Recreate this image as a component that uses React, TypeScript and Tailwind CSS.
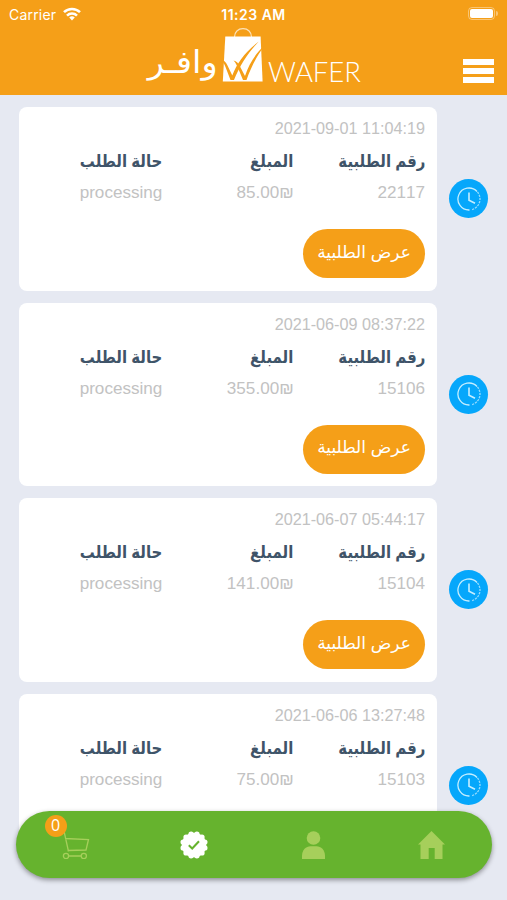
import React from 'react';

const orders = [
  { date: '2021-09-01 11:04:19', id: '22117', total: '85.00₪' },
  { date: '2021-06-09 08:37:22', id: '15106', total: '355.00₪' },
  { date: '2021-06-07 05:44:17', id: '15104', total: '141.00₪' },
  { date: '2021-06-06 13:27:48', id: '15103', total: '75.00₪' },
];

function WifiIcon() {
  return (
    <svg className="ml-[7px] h-[14px] w-[18px]" viewBox="0 0 18 14" fill="none" stroke="#fff" strokeWidth="2.5">
      <path d="M1 5.2a11.3 11.3 0 0 1 16 0" />
      <path d="M4 8.6a7 7 0 0 1 10 0" />
      <path d="M6.2 10.6a4 4 0 0 1 5.6 0L9 13.6z" fill="#fff" stroke="none" />
    </svg>
  );
}

function BagIcon() {
  return (
    <svg className="h-[56px] w-[44px] shrink-0" viewBox="0 0 44 56" fill="none">
      <path d="M13.5 9c0-5 3.5-8.300 8.500-8.300s8.500 3.300 8.500 8.300" stroke="#fff" strokeOpacity=".7" strokeWidth="1.200" />
      <path d="M4.300 8.500h35.300l2 45H1.800z" fill="#fff" />
      <path d="M0 31.500c3 .5 5 2.500 6.500 6l4.800 10C16 35 24 24 37.700 13.500 27 25 19 37 13 52h-3.500L4.500 39C3 35.500 1.500 33 0 31.500z" fill="#f59f18" />
      <path d="M12.500 32.500c3 .5 5 2.500 6.500 6l5 9.500C28 36 34 26 43.500 17.500 36 28 30.500 38 25.500 52H22l-5-12c-1.500-3.500-2.500-5.500-4.500-7.500z" fill="#f59f18" />
    </svg>
  );
}

function ClockBadge() {
  return (
    <div className="flex size-[39px] shrink-0 items-center justify-center rounded-full bg-[#06a7fb]">
      <svg className="size-6" viewBox="0 0 24 24" fill="none" stroke="#c5eeff" strokeWidth="1.300">
        <path d="M12.500 23A11 11 0 1 1 20 4.500" />
        <path d="M20.500 5A11 11 0 0 1 14.500 22.700" strokeDasharray="2.200 1" strokeOpacity=".75" />
        <path d="M12 5.500v7.800l6 3" strokeWidth="1.600" />
      </svg>
    </div>
  );
}

function Field({ label, value }: { label: string; value: string }) {
  return (
    <div>
      <div className="h-[31px] origin-right scale-x-[0.88] text-[17px] leading-[33px] font-bold whitespace-nowrap text-[#3f5469]">{label}</div>
      <div dir="ltr" className="h-[31px] text-right text-[17.100px] leading-[33px] text-[#c2c2c2] [font-kerning:none]">{value}</div>
    </div>
  );
}

function OrderRow({ date, id, total }: { date: string; id: string; total: string }) {
  return (
    <div className="flex shrink-0 items-center gap-[12px]">
      <div dir="rtl" className="h-[183.500px] w-[418px] rounded-[8px] bg-white px-[12px] pt-[10px]">
        <div dir="ltr" className="h-[28px] text-right text-[16.200px] leading-[22px] text-[#c2c2c2] [font-kerning:none]">{date}</div>
        <div className="grid grid-cols-3">
          <Field label="رقم الطلبية" value={id} />
          <Field label="المبلغ" value={total} />
          <Field label="حالة الطلب" value="processing" />
        </div>
        <button className="mt-[22px] flex h-[49px] w-[122px] items-center justify-center rounded-full bg-[#f59f18] pb-[2px] text-[17px] whitespace-nowrap text-white">
          عرض الطلبية
        </button>
      </div>
      <ClockBadge />
    </div>
  );
}

function CartIcon() {
  return (
    <svg className="h-[28px] w-[28px]" viewBox="0 0 28 28" fill="none" stroke="#a6cf5b" strokeWidth="1.300">
      <path d="M2 0l4.500 20.500M3 7.500l23.500 1L24 19l-18.500.5M7 25h12" />
      <circle cx="4" cy="25" r="2.600" />
      <circle cx="21.800" cy="25" r="2.600" />
    </svg>
  );
}

function VerifiedIcon() {
  const points = Array.from({ length: 12 }, (_, i) => {
    const a = (i * Math.PI) / 6 + Math.PI / 12;
    return { x: 14 + 11.2 * Math.cos(a), y: 14 + 11.2 * Math.sin(a) };
  });
  return (
    <svg className="-ml-[2px] size-[28px]" viewBox="0 0 28 28">
      <circle cx="14" cy="14" r="12.300" fill="#fff" />
      {points.map((p, i) => (
        <circle key={i} cx={p.x} cy={p.y} r="2.700" fill="#fff" />
      ))}
      <path d="M8.800 14.200l3.400 3.300 6.800-7.300" fill="none" stroke="#66b32e" strokeWidth="2" />
    </svg>
  );
}

function PersonIcon() {
  return (
    <svg className="h-[28px] w-[23px]" viewBox="0 0 23 28" fill="#a6cf5b">
      <circle cx="11.500" cy="7" r="6.800" />
      <path d="M0 28v-3c0-6 4-9.700 8.500-9.700h6c4.500 0 8.500 3.700 8.500 9.700v3z" />
    </svg>
  );
}

function HomeIcon() {
  return (
    <svg className="-ml-[2px] h-[28px] w-[27px]" viewBox="0 0 27 28" fill="#a6cf5b">
      <path d="M13.500 0L27 13.500h-2.500V28h-7.800V17h-6v11H2.500V13.500H0z" />
    </svg>
  );
}

export default function App() {
  return (
    <div className="relative flex h-[900px] w-[507px] flex-col overflow-hidden bg-[#e6e9f2] font-['Liberation_Sans','DejaVu_Sans',sans-serif]">
      <header className="flex h-[95px] shrink-0 flex-col bg-[#f59f18] text-white">
        <div className="grid h-[28px] grid-cols-[1fr_auto_1fr] items-center px-[9px] font-['Inter','Liberation_Sans',sans-serif] text-[14px]">
          <div className="flex items-center">
            <span className="tracking-[0.2px]">Carrier</span>
            <WifiIcon />
          </div>
          <span className="text-center font-semibold tracking-[0.5px]">11:23 AM</span>
          <div className="flex items-center justify-end pb-[2px]">
            <div className="h-[13px] w-[27px] rounded-[4px] border border-white/40 p-[1px]">
              <div className="h-full rounded-[2px] bg-white" />
            </div>
            <div className="ml-px h-[5px] w-[2px] rounded-r bg-white/40" />
          </div>
        </div>
        <div className="flex h-[56px] pr-[13px] pl-[148px]">
          <div className="flex w-[72px] justify-end pt-[14px] pr-[2px]">
            <span className="origin-right scale-x-[1.08] text-[31px] leading-[42px] whitespace-nowrap">وافـر</span>
          </div>
          <div className="ml-px">
            <BagIcon />
          </div>
          <span className="ml-[3px] w-[94px] origin-left scale-x-[0.98] pt-[26px] font-['Lato',sans-serif] text-[28px] leading-[34px] font-light">WAFER</span>
          <div className="mt-[31px] ml-auto flex flex-col gap-[3px]">
            <div className="h-[6px] w-[31px] bg-white" />
            <div className="h-[6px] w-[31px] bg-white" />
            <div className="h-[6px] w-[31px] bg-white" />
          </div>
        </div>
      </header>
      <main className="mb-[54px] flex min-h-0 flex-1 flex-col gap-[12px] overflow-hidden pt-[12px] pl-[19px]">
        {orders.map((order) => (
          <OrderRow key={order.id} {...order} />
        ))}
      </main>
      <nav className="absolute top-[811px] left-[16px] grid h-[67px] w-[476px] grid-cols-4 place-items-center rounded-full bg-[#66b32e] shadow-[0_2px_5px_rgba(0,0,0,0.4)]">
        <div className="relative">
          <CartIcon />
          <span className="absolute -top-[16px] -left-[17px] flex size-[22px] items-center justify-center rounded-full bg-[#f59f18] pb-[2px] font-['Open_Sans',sans-serif] text-[16px] text-white">0</span>
        </div>
        <VerifiedIcon />
        <PersonIcon />
        <HomeIcon />
      </nav>
    </div>
  );
}
